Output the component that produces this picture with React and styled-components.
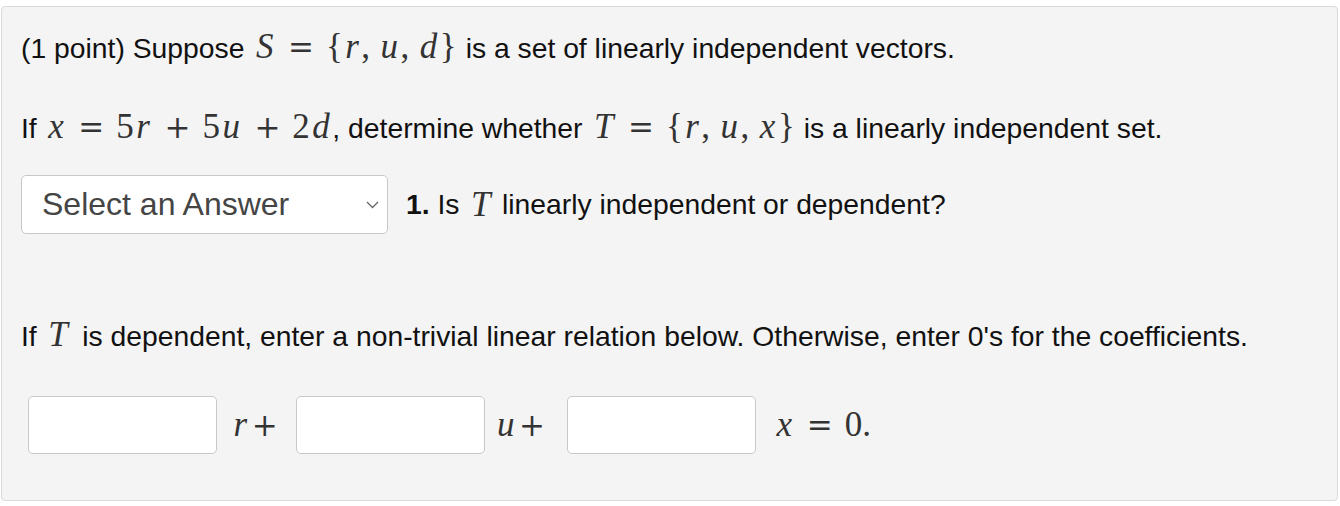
import React from "react";
import styled, { createGlobalStyle } from "styled-components";

const GlobalStyle = createGlobalStyle`
  html, body {
    margin: 0;
    padding: 0;
    background: #ffffff;
  }
  body {
    font-family: "Liberation Sans", Arial, sans-serif;
    color: #111;
  }
`;

const Panel = styled.div`
  box-sizing: border-box;
  margin: 6px 2px 0 1px;
  height: 495px;
  background: #f4f4f4;
  border: 1px solid #dadada;
  border-radius: 4px;
  padding: 20px 0 0 19px;
  display: flex;
  flex-direction: column;
`;

const Line = styled.div`
  display: flex;
  align-items: baseline;
  height: 40px;
  line-height: 40px;
  font-size: 28.3px;
  white-space: nowrap;
  margin-top: ${(p) => p.$top || 0}px;
`;

const Math = styled.span`
  font-family: "Liberation Serif", "Times New Roman", serif;
  font-size: 35px;
  color: #333;
  margin-left: ${(p) => p.$left ?? 9}px;
  margin-right: ${(p) => p.$right ?? 9}px;
  white-space: nowrap;
`;

const V = styled.i`
  font-style: italic;
  padding: 0 2.5px;
`;

const Op = styled.span`
  font-family: "DejaVu Serif", serif;
  font-size: 31px;
  font-style: normal;
  margin: 0 ${(p) => p.$gap ?? 12}px;
`;

const Plus = styled(Op)`
  margin: 0 0 0 2px;
`;

const Sep = styled.span`
  margin-right: 8px;
`;

const Row = styled.div`
  display: flex;
  align-items: center;
  margin-top: ${(p) => p.$top || 0}px;
  font-size: 28.3px;
  white-space: nowrap;
`;

const SelectBox = styled.div`
  box-sizing: border-box;
  width: 367px;
  height: 59px;
  background: #fff;
  border: 1px solid #c8c8c8;
  border-radius: 5px;
  display: flex;
  align-items: center;
  justify-content: space-between;
  padding: 0 8px 0 20px;
  font-size: 32px;
  color: #454545;
  margin-right: 18px;
`;

const Input = styled.div`
  box-sizing: border-box;
  width: 189px;
  height: 58px;
  background: #fff;
  border: 1px solid #c8c8c8;
  border-radius: 5px;
  margin-left: ${(p) => p.$left || 0}px;
`;

const Chevron = () => (
  <svg width="13" height="8" viewBox="0 0 13 8">
    <polyline points="1,1 6.5,6.5 12,1" fill="none" stroke="#666" strokeWidth="1.3" />
  </svg>
);

const App = () => {
  return (
    <>
      <GlobalStyle />
      <Panel>
        <Line>
          (1 point) Suppose
          <Math>
            <V>S</V>
            <Op>=</Op>
            {"{"}
            <V>r</V>
            <Sep>,</Sep>
            <V>u</V>
            <Sep>,</Sep>
            <V>d</V>
            {"}"}
          </Math>
          is a set of linearly independent vectors.
        </Line>
        <Line $top={40}>
          If
          <Math>
            <V>x</V>
            <Op>=</Op>5<V>r</V>
            <Op>+</Op>5<V>u</V>
            <Op>+</Op>2<V>d</V>
          </Math>
          <span style={{ marginLeft: -9 }}>, determine whether</span>
          <Math>
            <V>T</V>
            <Op>=</Op>
            {"{"}
            <V>r</V>
            <Sep>,</Sep>
            <V>u</V>
            <Sep>,</Sep>
            <V>x</V>
            {"}"}
          </Math>
          is a linearly independent set.
        </Line>
        <Row $top={28}>
          <SelectBox>
            Select an Answer
            <Chevron />
          </SelectBox>
          <b>1.</b>&nbsp;Is
          <Math $right={9}>
            <V>T</V>
          </Math>
          linearly independent or dependent?
        </Row>
        <Line $top={81}>
          If
          <Math $right={12}>
            <V>T</V>
          </Math>
          is dependent, enter a non-trivial linear relation below. Otherwise, enter 0's for the coefficients.
        </Line>
        <Row $top={41}>
          <Input $left={7} />
          <Math $left={14} $right={18}>
            <V>r</V>
            <Plus>+</Plus>
          </Math>
          <Input />
          <Math $left={10} $right={22}>
            <V>u</V>
            <Plus>+</Plus>
          </Math>
          <Input />
          <Math $left={18} $right={0}>
            <V>x</V>
            <Op>=</Op>0.
          </Math>
        </Row>
      </Panel>
    </>
  );
};

export default App;
